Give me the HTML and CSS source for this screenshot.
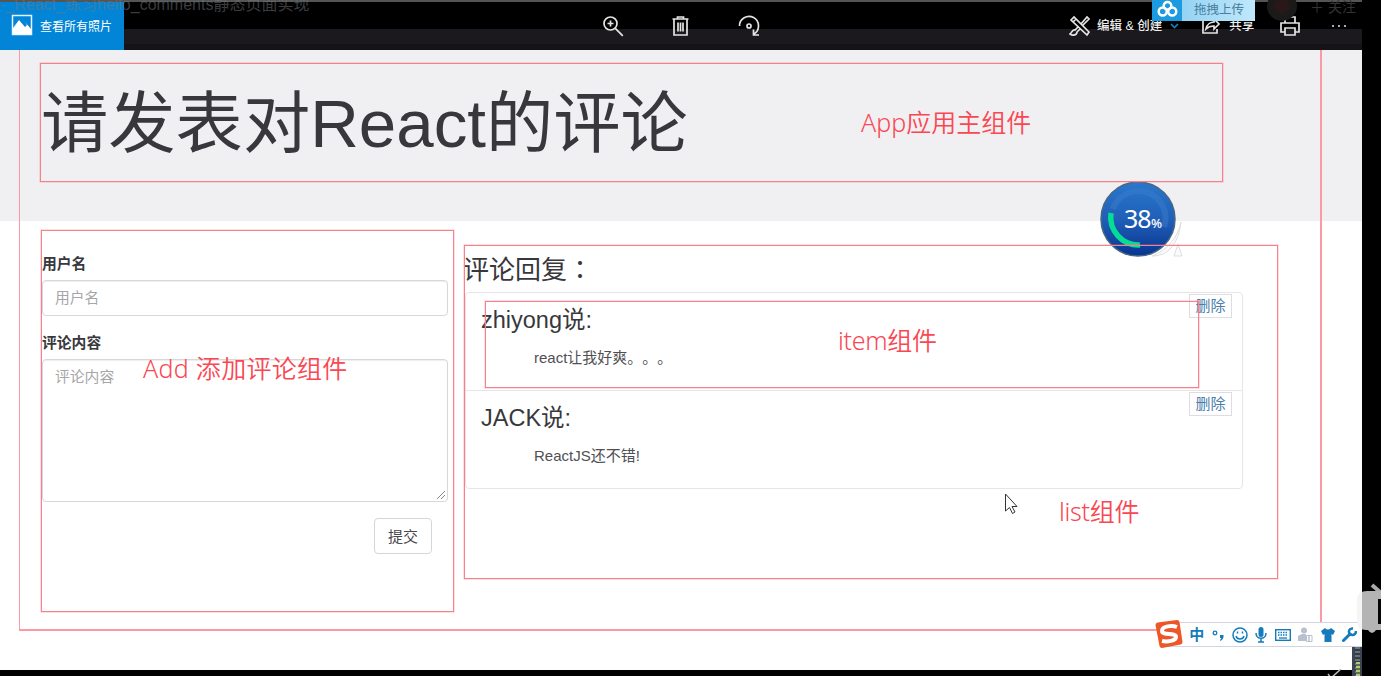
FILE: index.html
```html
<!DOCTYPE html>
<html lang="zh-CN">
<head>
<meta charset="utf-8">
<title>hello_comments</title>
<link rel="stylesheet" href="styles.css">
</head>
<body>
<div class="screen">
  <header class="viewer-bar">
    <div class="all-photos">
      <svg width="22" height="22" viewBox="0 0 22 22"><path d="M1.500 1.500h19v19h-19z" fill="none" stroke="#e8f5fc" stroke-width="1.500"/><path d="M2 20V14L8 6l6 7 2-2-2-3 6 7v5z" fill="#fff"/></svg>
      <span>查看所有照片</span>
    </div>
    <div class="tools">
      <svg width="24" height="24" viewBox="0 0 24 24"><circle cx="9.500" cy="9.500" r="6.500"/><path d="M14.300 14.300l7.500 7.500M9.500 6.500v6M6.500 9.500h6"/></svg>
      <svg width="24" height="24" viewBox="0 0 24 24"><path d="M3.500 5h16M8.500 5V3h6v2M5 5v16h13V5M9 8.500v9M11.500 8.500v9M14 8.500v9"/></svg>
      <svg width="24" height="24" viewBox="0 0 24 24"><path d="M2.500 12A9.500 9.500 0 1 1 17 20M16.500 15.500V21h5.500"/><circle cx="12" cy="12" r="2"/></svg>
    </div>
    <div class="actions">
      <svg class="act-edit" width="22" height="22" viewBox="0 0 22 22"><path d="M2 5l3-3 15 15-2 3zM4 7l3-3M12 9l6-7 2 2-7 7M9 12l-3 3c-3-1-3 3-5 4 3 2 7 1 7-2l3-3"/></svg>
      <span class="act-label">编辑 &amp; 创建</span>
      <svg class="act-chevron" width="9" height="6" viewBox="0 0 9 6"><path d="M1 1l3.500 3.500L8 1"/></svg>
      <svg class="act-share" width="20" height="18" viewBox="0 0 20 18"><path d="M5 3H2v13h14v-4M5 12c1-5 5-7 8-7V2l5 5-5 5V9c-4 0-6 1-8 3z"/></svg>
      <span class="act-label">共享</span>
      <svg class="act-print" width="22" height="22" viewBox="0 0 22 22"><path d="M6 8V2h10v6M6 17H2V8h18v9h-4M6 13h10v7H6z"/></svg>
      <svg class="act-more" width="16" height="4" viewBox="0 0 16 4"><path d="M1 2h2M7 2h2M13 2h2"/></svg>
    </div>
  </header>

  <section class="jumbotron"><h1>请发表对React的评论</h1></section>

  <main class="content">
    <form class="comment-form">
      <label>用户名</label>
      <div class="field">用户名</div>
      <label>评论内容</label>
      <div class="field area">评论内容
        <svg class="grip" width="10" height="10" viewBox="0 0 10 10"><path d="M1 9l8-8M5 9l4-4" stroke="#888" fill="none"/></svg>
      </div>
      <div class="form-foot"><button type="button">提交</button></div>
    </form>
    <section class="replies">
      <h2>评论回复<span class="colon" lang="zh-TW">：</span></h2>
      <ul>
        <li><div><h3>zhiyong说:</h3><p>react让我好爽。。。</p></div><a class="remove">删除</a></li>
        <li><div><h3>JACK说:</h3><p>ReactJS还不错!</p></div><a class="remove">删除</a></li>
      </ul>
    </section>
  </main>
  <div class="bottom-line"></div>
</div>

<svg class="progress" width="90" height="90" viewBox="0 0 90 90">
  <defs><linearGradient id="ball" x1="0" y1="0" x2="0" y2="1"><stop offset="0" stop-color="#2878cc"/><stop offset=".5" stop-color="#205fb8"/><stop offset="1" stop-color="#083591"/></linearGradient></defs>
  <path d="M83 44c-3 15-13 28-29 34 15 0 26-10 29-34zM80 66l4 12h-8z" fill="#fbfbfb" stroke="#ddd"/>
  <circle cx="40" cy="41" r="37" fill="url(#ball)" stroke="#496784" stroke-width="1.500"/>
  <path d="M15 31A27 27 0 0 1 66 49" fill="none" stroke="#3b7bca" stroke-width="6" opacity=".5"/>
  <path d="M13 35A28 28 0 0 0 42 67" fill="none" stroke="#05dc94" stroke-width="5.500"/>
  <text x="26" y="50" class="pct-number">38</text><text x="53" y="50" class="pct-sign">%</text>
</svg>

<div class="mark mark-page"></div>
<div class="mark mark-app"></div>
<div class="mark mark-add"></div>
<div class="mark mark-item"></div>
<div class="mark mark-list"></div>
<div class="note note-app">App应用主组件</div>
<div class="note note-add">Add 添加评论组件</div>
<div class="note note-item">item组件</div>
<div class="note note-list">list组件</div>

<svg class="pointer" width="15" height="22" viewBox="0 0 15 22"><path d="M1.500 1v17l4-3.500 3 6 2.500-1.500-3-5.500h5z" fill="#fff" stroke="#333"/></svg>

<div class="video-title">-_React_练习hello_comments静态页面实现</div>
<div class="follow"><i></i><span>＋ 关注</span></div>
<div class="upload">
  <svg width="30" height="22" viewBox="0 0 30 22"><g fill="none" stroke="#fff" stroke-width="2.600"><circle cx="15.500" cy="6" r="4"/><circle cx="10.500" cy="12" r="4.200"/><circle cx="20.500" cy="12" r="4.200"/></g></svg>
  <span>拖拽上传</span>
</div>

<div class="ime">
  <svg class="ime-logo" width="30" height="30" viewBox="0 0 30 30"><path d="M1.500 5q0-2 2-2.500L23 0q2 0 2.500 2L28.500 22q0 2-2 2.500L8 28q-2 0-2.500-2z" fill="#ee5527"/><path d="M23 7C18 5 8 6 8 11c0 5 14 1 14 6 0 4-9 5-14 4" fill="none" stroke="#fff" stroke-width="4"/></svg>
  <b>中</b>
  <svg width="13" height="16" viewBox="0 0 13 16"><circle cx="3" cy="6" r="1.800" fill="none" stroke="#147bbd" stroke-width="1.300"/><path d="M8 8h3.500c.5 3-1 5-3 6l-.5-1 1.500-2H8z" fill="#147bbd"/></svg>
  <svg width="16" height="16" viewBox="0 0 16 16" fill="none" stroke="#147bbd" stroke-width="1.500"><circle cx="8" cy="8" r="7"/><path d="M4 9c1 4 7 4 8 0M5.500 4.500v2M10.500 4.500v2"/></svg>
  <svg width="12" height="16" viewBox="0 0 12 16"><rect x="3.500" y="0" width="5" height="10" rx="2.500" fill="#147bbd"/><path d="M1 6c0 7 10 7 10 0M6 11v4M3 15h6" fill="none" stroke="#147bbd" stroke-width="1.500"/></svg>
  <svg width="16" height="12" viewBox="0 0 16 12" fill="none" stroke="#147bbd"><rect x=".7" y=".7" width="14.600" height="10.600" stroke-width="1.400"/><path d="M3 3.500h10M3 6h10" stroke-width="1.400" stroke-dasharray="1.500 1"/><path d="M4 9h8" stroke-width="1.300"/></svg>
  <svg width="15" height="15" viewBox="0 0 15 15"><circle cx="6" cy="3.500" r="3" fill="#b9c1d0"/><path d="M0 14V9l4-2h4v7z" fill="#b9c1d0"/><path d="M8.500 8.500H11v6H8.500zM11 8.500h3v6h-3z" fill="#fff" stroke="#b9c1d0"/></svg>
  <svg width="14" height="14" viewBox="0 0 14 14"><path d="M4 0q3 3 6 0l4 3-2 4-1.500-1v8h-7V6L2 7 0 3z" fill="#147bbd"/></svg>
  <svg width="15" height="15" viewBox="0 0 15 15"><path d="M1.500 13.500L8 7" stroke="#147bbd" stroke-width="3" stroke-linecap="round"/><path d="M11 1.500C7 1 6 5 8 7s6 1 6-3" fill="none" stroke="#147bbd" stroke-width="2.500"/></svg>
</div>
<div class="meter"></div>
<svg class="corner-mark" width="16" height="8" viewBox="0 0 16 8"><path d="M14 0L4 9M1 5l3 4h6" fill="none" stroke="#bbb" stroke-width="1.500"/></svg>
<svg class="tv" width="24" height="56" viewBox="0 0 24 56"><path d="M15 3l8 7" stroke="#aaa" stroke-width="4"/><path d="M24 9H10Q1 9 1 18v21q0 9 8 9h2q4 6 8 0h5z" fill="#b4b4b4"/><path d="M5 10Q0 12 0 18v21q0 7 5 9z" fill="#f5f5f5"/><path d="M24 17h-3v25h3" fill="#050505"/></svg>
</body>
</html>
```
FILE: styles.css
```css
* { box-sizing: border-box; }
body {
  margin: 0; width: 1381px; height: 676px; overflow: hidden; position: relative;
  background: #000; color: #38383c; text-spacing-trim: space-all;
  font-family: "Liberation Sans", "Noto Sans CJK SC", sans-serif;
}
.screen { width: 1362px; height: 676px; background: #fff; display: flex; flex-direction: column; }
.viewer-bar {
  height: 50px; flex: none; display: flex; align-items: flex-start; color: #eee;
  background: linear-gradient(#555 0 2px, #000 2px 29px, #1b191d 29px 44px, #151315 44px);
}
.all-photos {
  width: 124px; height: 48px; margin-top: 2px; padding: 0 0 2px 11px; background: #0285d7;
  display: flex; align-items: center; gap: 7px; font-size: 12px; color: #fff; white-space: nowrap;
}
.tools { display: flex; gap: 44px; margin: 14px 0 0 477px; }
.viewer-bar .tools svg, .actions svg { fill: none; stroke: #e4e4e4; stroke-width: 1.7; flex: none; }
.actions { display: flex; align-items: center; height: 22px; margin: 15px 0 0 308px; font-size: 12.500px; }
.act-label { white-space: nowrap; line-height: 20px; font-weight: 500; }
.act-edit { margin-right: 6px; }
.actions .act-chevron { stroke: #1281c8; margin-left: 8px; }
.act-share { margin: 0 8px 0 22px; }
.act-print { margin-left: 25px; }
.act-more { margin-left: 30px; }

.jumbotron { height: 171px; flex: none; background: #f0eff2; padding: 25px 41px 0; }
h1 { margin: 0; font-size: 67.300px; line-height: 98px; font-weight: 400; white-space: nowrap; }

.content { flex: 1; display: flex; gap: 17px; padding: 33px 0 0 42px; }
.comment-form { width: 406px; }
.comment-form label { display: block; font-size: 14.800px; line-height: 20px; font-weight: 700; margin-bottom: 6px; }
.field {
  height: 36px; border: 1px solid #d8d7da; border-radius: 4px; padding: 0 12px; margin-bottom: 17px;
  font-size: 14.800px; line-height: 34px; color: #a6a6aa; box-shadow: inset 0 1px 1px #eee;
}
.area { height: 143px; margin: 0 0 16px; position: relative; }
.grip { position: absolute; right: 1px; bottom: 1px; }
.form-foot { display: flex; justify-content: flex-end; padding-right: 16px; }
button {
  width: 58px; height: 36px; border: 1px solid #d5d5d5; border-radius: 4px; background: #fff;
  color: #48484c; font: 15px "Liberation Sans", "Noto Sans CJK SC", sans-serif; padding: 0 0 2px;
}
.replies { width: 778px; }
h2 { margin: -6px 0 0 -2px; font-size: 26px; line-height: 39px; font-weight: 400; height: 44px; }
.colon { font-family: "Noto Sans CJK TC", sans-serif; }
ul { margin: 0; padding: 0; list-style: none; border: 1px solid #e6e6e8; border-radius: 4px; height: 197px; }
li { height: 98px; display: flex; justify-content: space-between; align-items: flex-start; padding: 10px 10px 0 15px; }
li + li { border-top: 1px solid #e6e6e8; margin-top: -1px; }
h3 { margin: 0; font-size: 23.500px; line-height: 34px; font-weight: 400; white-space: nowrap; }
p { margin: 10px 0 0 53px; font-size: 15px; line-height: 22px; color: #505054; white-space: nowrap; }
.remove {
  width: 43px; height: 24px; margin-top: -9px; border: 1px solid #dedde2; background: #fff;
  color: #4c7eac; font-size: 15px; line-height: 22px; text-align: center;
}
.bottom-line { height: 6px; flex: none; background: #000; }

/* Annotations drawn over the page */
.mark { position: absolute; border: 1px solid #f8808c; box-shadow: 0 0 0 .5px rgba(250, 130, 142, .5); }
.mark-page { left: 19px; top: 50px; width: 1303px; height: 581px; border-width: 0 2px 2px 1px; border-color: #fb9aa4; box-shadow: none; }
.mark-app { left: 40px; top: 63px; width: 1183px; height: 119px; }
.mark-add { left: 41px; top: 230px; width: 413px; height: 382px; }
.mark-item { left: 485px; top: 301px; width: 714px; height: 87px; }
.mark-list { left: 464px; top: 245px; width: 814px; height: 334px; }
.note {
  position: absolute; color: #fa4752; font-size: 25px; line-height: 32px; white-space: nowrap;
  font-family: "Noto Sans", "Noto Sans CJK SC", sans-serif; font-weight: 350;
}
.note-app { left: 861px; top: 106px; }
.note-add { left: 143px; top: 352px; letter-spacing: .3px; }
.note-item { left: 838px; top: 324px; letter-spacing: -.3px; }
.note-list { left: 1059px; top: 495px; letter-spacing: -.3px; }
.progress { position: absolute; left: 1098px; top: 178px; }
.pct-number { font: 25px "Noto Sans", sans-serif; fill: #fff; letter-spacing: -1px; }
.pct-sign { font: 500 13px "Noto Sans", sans-serif; fill: #fff; }
.pointer { position: absolute; left: 1004px; top: 493px; }

/* Player and desktop overlays */
.video-title {
  position: absolute; left: 0; top: -6px; font-size: 16px; line-height: 22px;
  color: rgba(115, 120, 125, .5); white-space: nowrap;
}
.follow { position: absolute; left: 1267px; top: -9px; display: flex; align-items: center; gap: 13px; font-size: 14px; color: #333; white-space: nowrap; }
.follow i { width: 30px; height: 30px; border-radius: 50%; background: radial-gradient(#2a1717 30%, #1a1a1a 40%); }
.upload { position: absolute; left: 1152px; top: 0; width: 103px; height: 21px; display: flex; background: linear-gradient(90deg, #83caf0, #c0e8fb); }
.upload svg { flex: none; background: #1b9ae0; height: 21px; }
.upload span { font-size: 12.500px; line-height: 21px; color: #4a7d9e; padding-left: 12px; white-space: nowrap; }
.ime {
  position: absolute; left: 1166px; top: 622px; width: 196px; height: 25px; padding-right: 5px;
  background: #fff; border: 1px solid #cfd6df; border-right: 0; display: flex; align-items: center; justify-content: space-between;
}
.ime-logo { margin: 0 -2px 0 -13px; flex: none; }
.ime b { color: #147bbd; font-size: 15px; line-height: 24px; }
.meter { position: absolute; left: 1352px; top: 647px; width: 10px; height: 29px; background: linear-gradient(90deg, #3c4352 0 3px, transparent 3px 8px, #3c4352 8px), repeating-linear-gradient(#69737b 0 2px, #333c45 2px 4px); }
.meter::after { content: ""; position: absolute; width: 4px; height: 14px; left: 4px; top: 15px; background: repeating-linear-gradient(#b3c67a 0 2px, #58714f 2px 4px); }
.corner-mark { position: absolute; left: 1327px; top: 669px; }
.tv { position: absolute; left: 1357px; top: 582px; }
```
